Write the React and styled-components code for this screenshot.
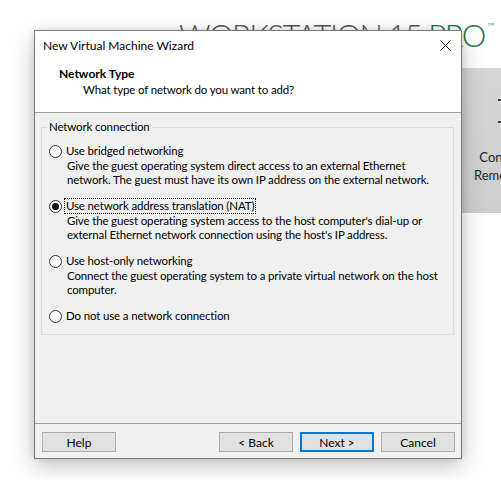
import styled, { createGlobalStyle } from 'styled-components';
import { useState } from 'react';

const GlobalStyle = createGlobalStyle`
  html, body {
    margin: 0;
    padding: 0;
    overflow: hidden;
    background: #ffffff;
  }
  body {
    font-family: Lato, "Liberation Sans", sans-serif;
    color: #000;
  }
`;

const networkOptions = [
  {
    id: 'bridged',
    label: 'Use bridged networking',
    lines: [
      'Give the guest operating system direct access to an external Ethernet',
      'network. The guest must have its own IP address on the external network.',
    ],
  },
  {
    id: 'nat',
    label: 'Use network address translation (NAT)',
    lines: [
      "Give the guest operating system access to the host computer's dial-up or",
      "external Ethernet network connection using the host's IP address.",
    ],
  },
  {
    id: 'hostonly',
    label: 'Use host-only networking',
    lines: [
      'Connect the guest operating system to a private virtual network on the host',
      'computer.',
    ],
  },
  {
    id: 'none',
    label: 'Do not use a network connection',
    lines: [],
  },
];

const App = () => {
  const [network, setNetwork] = useState('nat');

  return (
    <>
      <GlobalStyle />
      <Backdrop>
        <Brand>
          WORKSTATION 15 <span>PRO</span>
          <sup>™</sup>
        </Brand>
        <Tiles>
          <Tile>
            <svg width="40" height="30" viewBox="0 0 40 30" fill="none">
              <path d="M2 4h30M2 26h30" stroke="#3a3a3a" strokeWidth="2" />
              <path d="M32 4l-5-3M32 26l-5 3" stroke="#3a3a3a" strokeWidth="2" />
            </svg>
            <TileText>
              Connect to a
              <br />
              Remote Server
            </TileText>
          </Tile>
        </Tiles>
      </Backdrop>

      <Window>
        <TitleBar>
          <span>New Virtual Machine Wizard</span>
          <CloseButton aria-label="Close">
            <svg width="11" height="11" viewBox="0 0 11 11">
              <path d="M0.5 0.5l10 10M10.5 0.5l-10 10" stroke="#000" strokeWidth="1" />
            </svg>
          </CloseButton>
        </TitleBar>

        <Header>
          <Heading>Network Type</Heading>
          <Subheading>What type of network do you want to add?</Subheading>
        </Header>

        <Body>
          <Group>
            <Legend>Network connection</Legend>
            <OptionList>
              {networkOptions.map((opt) => (
                <Option key={opt.id}>
                  <RadioRow onClick={() => setNetwork(opt.id)}>
                    <Radio checked={network === opt.id} />
                    <RadioLabel focused={network === opt.id}>{opt.label}</RadioLabel>
                  </RadioRow>
                  {opt.lines.length > 0 && (
                    <Description>
                      {opt.lines.map((line) => (
                        <div key={line}>{line}</div>
                      ))}
                    </Description>
                  )}
                </Option>
              ))}
            </OptionList>
          </Group>
        </Body>

        <Footer>
          <Button>Help</Button>
          <Button push>&lt; Back</Button>
          <Button primary>Next &gt;</Button>
          <Button>Cancel</Button>
        </Footer>
      </Window>
    </>
  );
};

export default App;

const Backdrop = styled.div`
  display: flex;
  flex-direction: column;
  height: 480px;
`;

const Brand = styled.div`
  margin-top: 20px;
  padding-left: 179px;
  height: 30px;
  line-height: 30px;
  font-size: 31px;
  font-weight: 300;
  letter-spacing: -1.5px;
  color: #555;
  white-space: nowrap;

  span {
    color: #237343;
  }

  sup {
    font-size: 10px;
    letter-spacing: 0;
    color: #237343;
    vertical-align: top;
    line-height: 12px;
    margin-left: 2px;
  }
`;

const Tiles = styled.div`
  display: flex;
  margin-top: 18px;
  padding-left: 420px;
`;

const Tile = styled.div`
  flex: 0 0 192px;
  height: 145px;
  background: linear-gradient(#d6d6d6, #cdcdcd);
  display: flex;
  flex-direction: column;
  align-items: center;
  padding-top: 28px;
  box-sizing: border-box;
`;

const TileText = styled.div`
  margin-top: 22px;
  font-size: 13px;
  line-height: 18px;
  text-align: center;
  color: #1e1e1e;
  white-space: nowrap;
`;

const Window = styled.div`
  position: absolute;
  left: 34px;
  top: 30px;
  width: 428px;
  height: 429px;
  box-sizing: border-box;
  border: 1px solid #7a7a7a;
  background: #f0f0f0;
  display: flex;
  flex-direction: column;
  font-size: 11.5px;
  letter-spacing: -0.15px;
  box-shadow: 0 8px 22px rgba(0, 0, 0, 0.22), 0 0 8px rgba(0, 0, 0, 0.12);
`;

const TitleBar = styled.div`
  height: 30px;
  box-sizing: border-box;
  background: #fff;
  display: flex;
  align-items: center;
  justify-content: space-between;
  padding: 0 9px 2px 8px;
  font-size: 12px;
  letter-spacing: 0;
`;

const CloseButton = styled.div`
  display: flex;
  align-items: center;
  justify-content: center;
  width: 14px;
  height: 14px;
`;

const Header = styled.div`
  height: 46px;
  background: #fff;
  border-bottom: 1px solid #a0a0a0;
  padding: 5px 0 0 24px;
  line-height: 16px;
`;

const Heading = styled.div`
  font-weight: 700;
  font-size: 12px;
  letter-spacing: 0;
`;

const Subheading = styled.div`
  padding-left: 24px;
`;

const Body = styled.div`
  flex: 1;
  padding: 6px 7px 0 6px;
`;

const Group = styled.fieldset`
  margin: 0;
  min-width: 0;
  border: 1px solid #dcdcdc;
  padding: 8px 8px 10px 7px;
`;

const Legend = styled.legend`
  padding: 0 2px;
  margin-left: -2px;
  line-height: 16px;
`;

const OptionList = styled.div`
  display: flex;
  flex-direction: column;
  gap: 12px;
`;

const Option = styled.div`
  display: flex;
  flex-direction: column;
  white-space: nowrap;
`;

const RadioRow = styled.div`
  display: flex;
  align-items: center;
  gap: 3px;
  height: 16px;
  cursor: default;
`;

const Radio = styled.span`
  width: 13px;
  height: 13px;
  box-sizing: border-box;
  border-radius: 50%;
  border: 1px solid #333;
  background: #fff;
  display: flex;
  align-items: center;
  justify-content: center;

  &::after {
    content: '';
    width: 7px;
    height: 7px;
    border-radius: 50%;
    background: ${({ checked }) => (checked ? '#000' : 'transparent')};
  }
`;

const RadioLabel = styled.span`
  line-height: 14px;
  padding: 0 1px;
  outline: ${({ focused }) => (focused ? '1px dotted #000' : 'none')};
`;

const Description = styled.div`
  padding-left: 18px;
  line-height: 13.5px;
`;

const Footer = styled.div`
  border-top: 1px solid #a0a0a0;
  padding: 8px 6px 6px 7px;
  display: flex;
  gap: 7px;
`;

const Button = styled.div`
  width: 74px;
  height: 20px;
  box-sizing: border-box;
  border: ${({ primary }) => (primary ? '2px solid #0078d7' : '1px solid #adadad')};
  background: #e1e1e1;
  display: flex;
  align-items: center;
  justify-content: center;
  font-size: 12px;
  letter-spacing: 0;
  margin-left: ${({ push }) => (push ? 'auto' : '0')};
`;
